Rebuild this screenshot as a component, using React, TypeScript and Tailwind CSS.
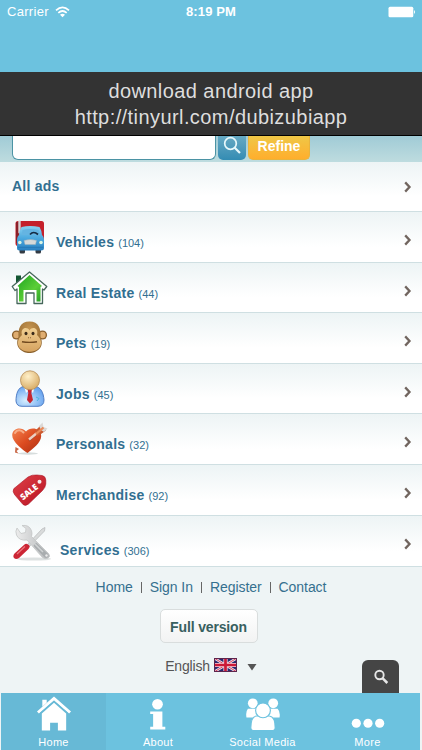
import type { ReactNode } from 'react';

type Category = {
  name: string;
  count: number;
  icon: ReactNode;
  rowClass: string;
  textClass: string;
};

function VehicleIcon() {
  return (
    <svg width="42" height="49" viewBox="0 0 42 49">
      <defs>
        <linearGradient id="truck" x1="0" y1="0" x2="0" y2="1">
          <stop offset="0" stopColor="#8bd2f2" />
          <stop offset=".5" stopColor="#4ba9df" />
          <stop offset="1" stopColor="#2a80c0" />
        </linearGradient>
      </defs>
      <rect x="5.5" y="9" width="28.5" height="25" rx="2.5" fill="#c5202b" />
      <rect x="6" y="10" width="3" height="21" fill="#8b2029" />
      <rect x="8.3" y="8.5" width="2.4" height="13" rx="1" fill="#d8d4d4" />
      <rect x="9.5" y="35" width="5.5" height="6.500" rx="1.500" fill="#333b44" />
      <rect x="25.5" y="35" width="5.5" height="6.500" rx="1.500" fill="#333b44" />
      <path d="M11.500 15Q20 13 29.500 15Q31.500 18 32 23Q34.500 25 34 31V36Q34 38.500 31 38.500H9.500Q7 38.500 7 36V31Q6.500 25 9 23Q9.500 18 11.500 15Z" fill="url(#truck)" />
      <path d="M12.500 18Q20 16 28.500 18L29.500 23H11.500Z" fill="#64b4e2" />
      <path d="M20 22.500Q23.500 18.500 28 22.500" fill="none" stroke="#142b43" strokeWidth="1.700" />
      <path d="M14 28.500Q20.500 26.500 26.500 28.500L25.500 32.500H15Z" fill="#d5d9d9" stroke="#9fb0ba" strokeWidth=".5" />
      <circle cx="9.800" cy="30.500" r="1.800" fill="#d9f4e4" />
      <circle cx="31" cy="30.500" r="1.800" fill="#d9f4e4" />
      <path d="M8 35.300H33" stroke="#2273b0" strokeWidth=".8" />
    </svg>
  );
}

function HouseIcon() {
  return (
    <svg width="42" height="49" viewBox="0 0 42 49">
      <defs>
        <linearGradient id="house" x1="0" y1="0" x2="1" y2="1">
          <stop offset="0" stopColor="#1da51f" />
          <stop offset=".6" stopColor="#5cce38" />
          <stop offset="1" stopColor="#239e25" />
        </linearGradient>
      </defs>
      <path d="M6 12.500H11V18L6 22Z" fill="#135632" />
      <path d="M19.500 9L36.800 23.500L34 27L32.500 26V40.500H24V30H16V40.500H7V26L5 27.500L2.200 23.500Z" fill="#fff" stroke="#46675b" strokeWidth="1.300" strokeLinejoin="round" />
      <path d="M19.500 12L32 23L30.500 24V38.500H26.500V27H13.500V38.500H9V24L7.500 23Z" fill="url(#house)" />
    </svg>
  );
}

function MonkeyIcon() {
  return (
    <svg width="42" height="49" viewBox="0 0 42 49">
      <defs>
        <radialGradient id="monkey" cx=".5" cy=".25" r=".75">
          <stop offset="0" stopColor="#c6954f" />
          <stop offset="1" stopColor="#8a602b" />
        </radialGradient>
        <linearGradient id="monkeyFace" x1="0" y1="0" x2="0" y2="1">
          <stop offset="0" stopColor="#f0cf91" />
          <stop offset="1" stopColor="#d6a360" />
        </linearGradient>
      </defs>
      <circle cx="6.500" cy="22" r="4.600" fill="#8b602d" />
      <circle cx="32.500" cy="22" r="4.600" fill="#8b602d" />
      <circle cx="6.500" cy="22" r="3.200" fill="#dfad70" />
      <circle cx="32.500" cy="22" r="3.200" fill="#dfad70" />
      <path d="M19.500 8.500C10 8.500 8 16 8.500 24C4 34 12 40 19.500 40S35 34 30.500 24C31 16 29 8.500 19.500 8.500Z" fill="url(#monkey)" />
      <path d="M19.500 17.500C17 13 10 15 12 22C7 26 6.500 33 11 36C15 39.500 24 39.500 28 36C32.500 33 32 26 27 22C29 15 22 13 19.500 17.500Z" fill="url(#monkeyFace)" />
      <ellipse cx="16" cy="20.500" rx="1.500" ry="1.800" fill="#392a1a" />
      <ellipse cx="23" cy="20.500" rx="1.500" ry="1.800" fill="#392a1a" />
      <path d="M18 24.500L19 25M21 24.500L20 25" stroke="#8d6434" />
      <path d="M12 28.800Q19.500 30 27 28.800" fill="none" stroke="#70491f" strokeWidth="1.400" />
    </svg>
  );
}

function PersonIcon() {
  return (
    <svg width="42" height="49" viewBox="0 0 42 49">
      <defs>
        <radialGradient id="head" cx=".4" cy=".3" r=".7">
          <stop offset="0" stopColor="#fff0c9" />
          <stop offset="1" stopColor="#d9ae68" />
        </radialGradient>
        <radialGradient id="shirt" cx=".35" cy=".7" r=".7">
          <stop offset="0" stopColor="#d7efff" />
          <stop offset="1" stopColor="#68a4ef" />
        </radialGradient>
      </defs>
      <path d="M14 22.500C8 23 6 30 6 37Q6.500 42.300 12 42.300H28Q34 42 34 36C33.500 29 31 23 25 22.500Z" fill="url(#shirt)" stroke="#507ec5" />
      <path d="M14 22L19.500 27L25 22L23 29L19.500 26L16 29Z" fill="#f5faff" />
      <path d="M17.500 25H22L21.300 29L23 36L20 39.500L17 36L18.300 29Z" fill="#c62631" />
      <path d="M26 33L29 34.500L27 37" fill="none" stroke="#4bb5df" />
      <circle cx="20" cy="16.300" r="9.500" fill="url(#head)" stroke="#b58b56" strokeWidth=".8" />
    </svg>
  );
}

function HeartIcon() {
  return (
    <svg width="42" height="49" viewBox="0 0 42 49">
      <defs>
        <linearGradient id="heart" x1="0" y1="0" x2="1" y2="1">
          <stop offset="0" stopColor="#f38450" />
          <stop offset=".5" stopColor="#dc4b20" />
          <stop offset="1" stopColor="#a92f13" />
        </linearGradient>
      </defs>
      <ellipse cx="18" cy="39.500" rx="10" ry="1.200" fill="#d7dddd" />
      <path d="M5.500 33L9 35L6.500 37L8.500 39.500L5 38.500Z" fill="#c76443" />
      <path d="M17.500 39C13 36 2 28 2.200 21C2.400 13.500 12 12.500 16 17.500C20 12.500 31 13.500 31.200 22C31.200 29 22 35 17.500 39Z" fill="url(#heart)" />
      <path d="M5 19C7 15.500 11 15.500 13.500 18.500" stroke="#f7ac86" strokeWidth="2" fill="none" strokeLinecap="round" />
      <path d="M19 27L29 18.500" stroke="#a9452c" strokeWidth="1.500" />
      <path d="M19 25.500L30 16.500" stroke="#ecd0c2" strokeWidth="2.400" />
      <path d="M25 17L31 11L32.500 14.500L36 16.500L31 20L27 22Z" fill="#cb5a30" />
      <path d="M29 12L32.500 8.500L33.500 13L37.500 14.500L34 18L31 16Z" fill="#dcd9d6" />
      <path d="M26 20L33.500 13.500" stroke="#ea8a58" strokeWidth="2.300" />
    </svg>
  );
}

function SaleIcon() {
  return (
    <svg width="42" height="49" viewBox="0 0 42 49">
      <defs>
        <linearGradient id="sale" x1="0" y1="0" x2="1" y2="1">
          <stop offset="0" stopColor="#df4148" />
          <stop offset="1" stopColor="#b81322" />
        </linearGradient>
      </defs>
      <path d="M4 23.500L18 12Q22 9.500 27 10L32 10.500Q35.500 11 35.800 15V19Q35.500 22.500 32.500 25.500L18.500 39Q15.500 41.500 13 39.500L4.500 29.500Q2 26 4 23.500Z" fill="url(#sale)" stroke="#a91424" strokeWidth=".6" />
      <circle cx="29.500" cy="16.800" r="2" fill="#f6eded" />
      <text x="13" y="35.500" transform="rotate(-38 13 35.500)" fill="#fff" fontFamily="Open Sans, sans-serif" fontSize="8.500" fontWeight="800" textLength="20">SALE</text>
    </svg>
  );
}

function ToolsIcon() {
  return (
    <svg width="42" height="49" viewBox="0 0 42 49">
      <defs>
        <linearGradient id="metal">
          <stop offset="0" stopColor="#ececec" />
          <stop offset="1" stopColor="#b3b6b8" />
        </linearGradient>
      </defs>
      <ellipse cx="24" cy="43" rx="17" ry="1.600" fill="#dde1e1" />
      <path d="M32 13L35 11.500L34.500 15L17 33L15 31Z" fill="#d9dbdb" stroke="#b4b8b9" strokeWidth=".7" />
      <path d="M18 28.500Q21 30 18.500 33L9 42Q6 44 4 42Q2.500 40 4.500 37.500L14.500 28.500Q16 27 18 28.500Z" fill="#cc2635" />
      <path d="M7 38L15 30.500" stroke="#eb777d" strokeWidth="1.200" />
      <path d="M12 9.500Q19 8.500 21.500 14.500Q22.500 17.500 21.500 20.500L38.500 37.500Q41 40.500 38 42Q35 44 32 41L17 24Q9 25 6.500 19Q5 15 7 12L11 17.500L15.500 16.500L16 12.500Z" fill="url(#metal)" stroke="#c4c6c7" strokeWidth=".8" />
      <path d="M26 29.500L36 39.500" stroke="#a9adaf" strokeWidth="4.500" strokeLinecap="round" />
      <path d="M23.500 26.500L33 36" stroke="#d0d3d4" strokeWidth="1.500" />
      <circle cx="36.500" cy="39.500" r="1.200" fill="#ececec" />
    </svg>
  );
}

const categories: Category[] = [
  { name: 'Vehicles', count: 104, icon: <VehicleIcon />, rowClass: 'h-[51px]', textClass: 'pt-[21px] pl-1' },
  { name: 'Real Estate', count: 44, icon: <HouseIcon />, rowClass: 'h-[50px]', textClass: 'pt-[21px] pl-1' },
  { name: 'Pets', count: 19, icon: <MonkeyIcon />, rowClass: 'h-[51px]', textClass: 'pt-[21px] pl-1' },
  { name: 'Jobs', count: 45, icon: <PersonIcon />, rowClass: 'h-[50px]', textClass: 'pt-[21px] pl-1' },
  { name: 'Personals', count: 32, icon: <HeartIcon />, rowClass: 'h-[51px]', textClass: 'pt-[21px] pl-1' },
  { name: 'Merchandise', count: 92, icon: <SaleIcon />, rowClass: 'h-[51px]', textClass: 'pt-[21px] pl-1' },
  { name: 'Services', count: 306, icon: <ToolsIcon />, rowClass: 'h-[51px]', textClass: 'pt-[25px] pl-2' },
];

function Chevron() {
  return (
    <svg width="8" height="12" viewBox="0 0 8 12" className="shrink-0">
      <path d="M1.200 1.400L5.500 6L1.200 10.600" fill="none" stroke="#71655f" strokeWidth="2.300" />
    </svg>
  );
}

function StatusBar() {
  return (
    <header className="flex h-[72px] shrink-0 items-start justify-between bg-[#6cc2df] text-[13px] leading-6 text-white">
      <div className="flex w-[150px] items-center pl-[7px]">
        <span className="tracking-[0.3px]">Carrier</span>
        <svg width="15" height="12" viewBox="0 0 15 12" className="ml-[6px]">
          <path d="M1 4.300Q7.500-1.500 14 4.300M3.300 6.800Q7.500 3.200 11.700 6.800" fill="none" stroke="#fff" strokeWidth="1.700" />
          <path d="M5 8.700Q7.500 6.700 10 8.700L7.500 11.200Z" fill="#fff" />
        </svg>
      </div>
      <span className="font-bold tracking-[0.15px]">8:19 PM</span>
      <div className="flex h-6 w-[150px] items-center justify-end pr-[6px]">
        <svg width="28" height="12" viewBox="0 0 28 12">
          <rect x=".5" y=".8" width="24.800" height="10.400" rx="1.500" fill="#fff" />
          <path d="M26 4Q28 6 26 8Z" fill="#fff" />
        </svg>
      </div>
    </header>
  );
}

function SearchBar() {
  return (
    <div className="flex h-[26px] shrink-0 items-start overflow-hidden bg-linear-to-b from-[#a0cbd6] to-[#bedcdf] pl-3">
      <input aria-label="Search" className="h-[24px] w-[204px] rounded-b-[6px] border border-t-0 border-[#4b93a4] bg-white outline-none" />
      <button aria-label="Search ads" className="ml-[2px] flex h-[24px] w-7 justify-center rounded-b-[5px] bg-linear-to-b from-[#65a9c3] to-[#338cb3]">
        <svg width="20" height="20" viewBox="0 0 20 20">
          <circle cx="8.500" cy="7.500" r="5.800" fill="none" stroke="#e7f8fb" strokeWidth="1.700" />
          <path d="M12.500 11.500L18 17" stroke="#e7f8fb" strokeWidth="2.200" />
        </svg>
      </button>
      <button className="ml-[2px] h-[24px] w-[62px] rounded-b-[5px] border border-t-0 border-[#e8b43e] bg-linear-to-b from-[#efc746] to-[#ffae2c] pb-[4px] text-[14px] leading-5 font-bold text-white">
        Refine
      </button>
    </div>
  );
}

function FlagIcon() {
  return (
    <svg width="23" height="14" viewBox="0 0 23 14" className="mb-[3px] ml-1">
      <path fill="#29286f" d="M0 0H23V14H0Z" />
      <path d="M0 0L23 14M23 0L0 14" stroke="#eee3ed" strokeWidth="2.600" />
      <path d="M0 0L23 14M23 0L0 14" stroke="#da4560" strokeWidth="1" />
      <path d="M11.500 0V14M0 7H23" stroke="#f5d3dc" strokeWidth="4.200" />
      <path d="M11.500 0V14M0 7H23" stroke="#cb1838" strokeWidth="2.700" />
      <rect x=".5" y=".5" width="22" height="13" fill="none" stroke="#5c254d" />
    </svg>
  );
}

function Footer() {
  return (
    <footer className="flex h-[126px] shrink-0 flex-col items-center">
      <nav className="flex h-10 items-center gap-[8px] text-[14px] tracking-[-0.06px] text-[#35708f]">
        <a href="#home">Home</a>
        <span className="h-[11px] w-px bg-[#666]" />
        <a href="#signin">Sign In</a>
        <span className="h-[11px] w-px bg-[#666]" />
        <a href="#register">Register</a>
        <span className="h-[11px] w-px bg-[#666]" />
        <a href="#contact">Contact</a>
      </nav>
      <button className="mt-[2px] mr-[5px] h-[34px] w-[98px] shrink-0 rounded-[5px] border border-[#d9dddd] bg-linear-to-b from-white to-[#f2f3f3] pt-[2px] text-[14px] font-bold tracking-[-0.15px] text-[#38605f]">
        Full version
      </button>
      <div className="flex w-full grow items-stretch justify-end pr-[23px]">
        <div className="flex h-[46px] items-center text-[14px] tracking-[-0.15px] text-[#555]">
          <span>English</span>
          <FlagIcon />
          <svg width="10" height="8" viewBox="0 0 10 8" className="mt-[2px] ml-[10px]">
            <path d="M.500 1H9.500L5 7.500Z" fill="#555" />
          </svg>
        </div>
        <button aria-label="Search site" className="mt-[17px] ml-[105px] flex h-[33px] w-[37px] items-center justify-center rounded-t-[6px] bg-[#454545]">
          <svg width="16" height="16" viewBox="0 0 16 16">
            <circle cx="6.500" cy="6" r="4.200" fill="none" stroke="#e6e6e6" strokeWidth="1.900" />
            <path d="M9.500 9.200L14.300 14" stroke="#e6e6e6" strokeWidth="2.500" />
          </svg>
        </button>
      </div>
    </footer>
  );
}

function TabBar() {
  return (
    <nav className="flex h-[57px] shrink-0 bg-[#eef4f5] pr-[2px] pl-px text-[11px] text-white">
      <div className="flex w-[105px] flex-col items-center bg-[#67b9d6]">
        <svg width="36" height="38" viewBox="0 0 36 38" className="mt-[2px]">
          <path d="M6 5H10.500V8L6 12ZM5.500 19L18 8L30.500 19V36.500H22V28.500H14V36.500H5.500Z" fill="#fff" />
          <path d="M1.500 18L18 3.500L34.500 18" fill="none" stroke="#fff" strokeWidth="3" />
          <path d="M3.500 19L18 6.500L32.500 19" fill="none" stroke="#67b9d6" strokeWidth="1" />
        </svg>
        <span className="mt-[2px] leading-4 tracking-[0.3px]">Home</span>
      </div>
      <div className="flex w-[104px] flex-col items-center bg-[#6cc2df]">
        <svg width="18" height="38" viewBox="0 0 18 38" className="mt-[2px]">
          <circle cx="8.500" cy="9.500" r="5.500" fill="#fff" />
          <path d="M1 17H13.500V32.500H16.500V35.500H1V32.500H4V19.500H1Z" fill="#fff" />
        </svg>
        <span className="mt-[2px] leading-4 tracking-[0.3px]">About</span>
      </div>
      <div className="flex w-[105px] flex-col items-center bg-[#6cc2df]">
        <svg width="38" height="38" viewBox="0 0 38 38" className="mt-[2px]">
          <path d="M3.500 14H12L13 23H2Q1 17 3.500 14ZM25.500 14H34Q37 17 36 23H24Z" fill="#fff" />
          <circle cx="8.500" cy="8.500" r="5" fill="#fff" />
          <circle cx="29.500" cy="8.500" r="5" fill="#fff" />
          <path d="M12.500 21.500H25.500Q31.500 22 31.500 34Q31.500 36.500 29 36.500H9Q6.500 36.500 6.500 34Q6.500 22 12.500 21.500Z" fill="#fff" stroke="#6cc2df" strokeWidth="1.100" />
          <circle cx="19" cy="15.800" r="7.600" fill="#fff" stroke="#6cc2df" strokeWidth="1.200" />
        </svg>
        <span className="mt-[2px] leading-4 tracking-[0.3px]">Social Media</span>
      </div>
      <div className="flex w-[105px] flex-col items-center bg-[#6cc2df]">
        <svg width="34" height="38" viewBox="0 0 34 38" className="mt-[2px]">
          <circle cx="5" cy="29" r="4.700" fill="#fff" />
          <circle cx="17" cy="29" r="4.700" fill="#fff" />
          <circle cx="29" cy="29" r="4.700" fill="#fff" />
        </svg>
        <span className="mt-[2px] leading-4 tracking-[0.3px]">More</span>
      </div>
    </nav>
  );
}

export default function App() {
  return (
    <div className="flex h-[750px] w-[422px] flex-col overflow-hidden bg-[#eef4f5] font-['Liberation_Sans',sans-serif]">
      <StatusBar />
      <div className="h-16 shrink-0 border-b border-black bg-[#333] pt-[6px] text-center text-[20px] leading-[26px] tracking-[0.42px] text-[#dedede]">
        <p>download android app</p>
        <p>http://tinyurl.com/dubizubiapp</p>
      </div>
      <SearchBar />
      <main className="shrink-0">
        <div className="flex h-[50px] items-center justify-between border-b border-[#cfdfe2] bg-linear-to-b from-[#edf4f5] to-white to-70% pr-[10px] pl-3">
          <a href="#all" className="text-[14px] font-bold tracking-[0.25px] text-[#326f91]">All ads</a>
          <Chevron />
        </div>
        {categories.map((category) => (
          <div
            key={category.name}
            className={`flex items-start border-b border-[#cfdfe2] bg-linear-to-b from-[#edf4f5] to-white to-70% pl-[10px] ${category.rowClass}`}
          >
            {category.icon}
            <a href="#category" className={`flex grow items-baseline leading-[18px] text-[#326f91] ${category.textClass}`}>
              <span className="text-[14px] font-bold tracking-[0.27px]">{category.name}</span>
              <span className="ml-1 text-[11px]">({category.count})</span>
            </a>
            <div className="pt-[22px] pr-[10px]">
              <Chevron />
            </div>
          </div>
        ))}
      </main>
      <Footer />
      <TabBar />
    </div>
  );
}
